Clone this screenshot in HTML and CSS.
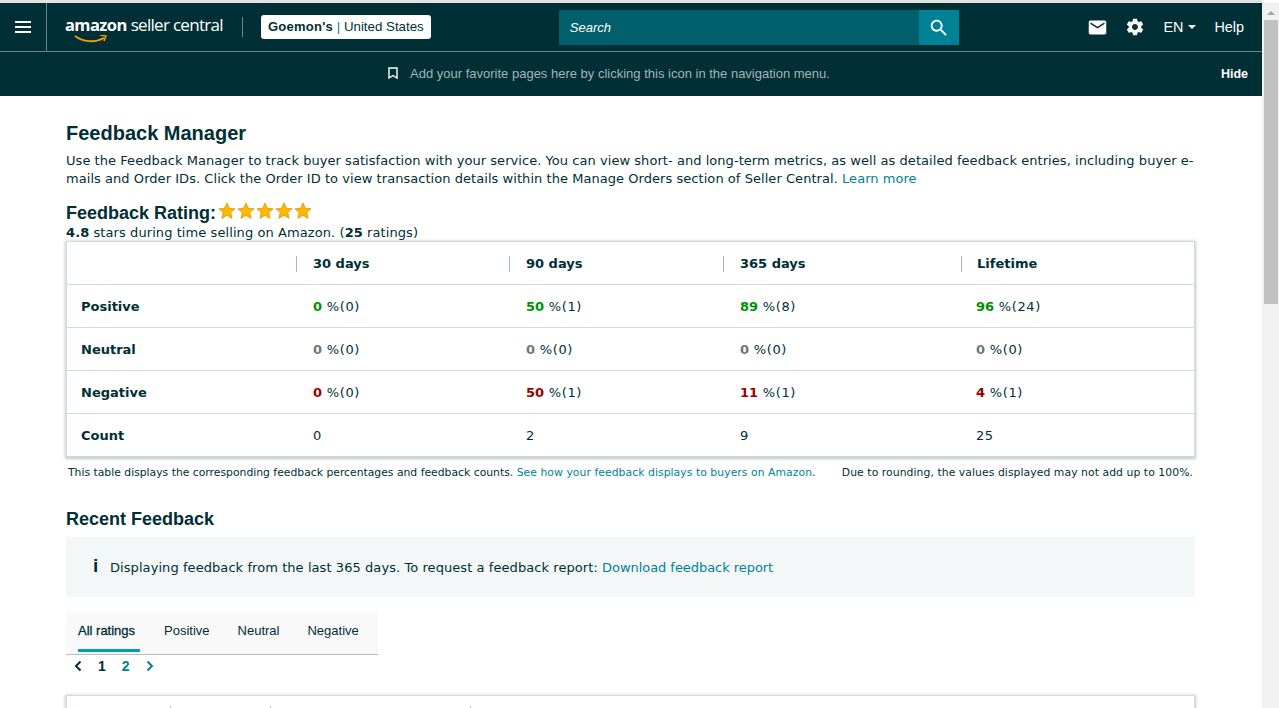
FILE: index.html
```html
<!doctype html>
<html lang="en">

<head>
    <meta charset="UTF-8">
    <title>Feedback Manager</title>
    <link rel="stylesheet" href="styles.css">
</head>

<body>
    <div class="page">
        <header class="topnav">
            <div class="topnav--menu">
                <svg width="16" height="12" viewBox="0 0 16 12"><path d="M0 1h16M0 6h16M0 11h16" stroke="#fff" stroke-width="2"/></svg>
            </div>
            <div class="topnav--logo">
                <span class="logo--amazon">amazon</span><span class="logo--rest">seller central</span>
                <svg class="logo--smile" width="34" height="9" viewBox="0 0 34 9"><path d="M1 1c8 6 20 7 29 2" fill="none" stroke="#f90" stroke-width="2"/><path d="M26 0l6 1-2 5" fill="none" stroke="#f90" stroke-width="1.5"/></svg>
            </div>
            <div class="topnav--divider"></div>
            <div class="topnav--account"><b>Goemon's</b> <i>|</i> United States</div>
            <div class="search">
                <span class="search--input">Search</span>
                <span class="search--button">
                    <svg width="22" height="22" viewBox="0 0 24 24"><path fill="#fff" d="M15.5 14h-.79l-.28-.27C15.41 12.59 16 11.11 16 9.5 16 5.91 13.09 3 9.5 3S3 5.91 3 9.5 5.91 16 9.5 16c1.61 0 3.09-.59 4.23-1.57l.27.28v.79l5 4.99L20.49 19l-4.99-5zm-6 0C7.01 14 5 11.99 5 9.5S7.01 5 9.5 5 14 7.01 14 9.5 11.99 14 9.5 14z"/></svg>
                </span>
            </div>
            <div class="topnav--right">
                <svg width="21" height="21" viewBox="0 0 24 24"><path fill="#fff" d="M20 4H4c-1.1 0-1.99.9-1.99 2L2 18c0 1.1.9 2 2 2h16c1.1 0 2-.9 2-2V6c0-1.1-.9-2-2-2zm0 4l-8 5-8-5V6l8 5 8-5v2z"/></svg>
                <svg class="icon--gear" width="20" height="20" viewBox="0 0 24 24"><path fill="#fff" d="M19.43 12.98c.04-.32.07-.64.07-.98s-.03-.66-.07-.98l2.11-1.65c.19-.15.24-.42.12-.64l-2-3.46c-.12-.22-.39-.3-.61-.22l-2.49 1c-.52-.4-1.08-.73-1.69-.98l-.38-2.65C14.46 2.18 14.25 2 14 2h-4c-.25 0-.46.18-.49.42l-.38 2.65c-.61.25-1.17.59-1.69.98l-2.49-1c-.23-.09-.49 0-.61.22l-2 3.46c-.13.22-.07.49.12.64l2.11 1.65c-.04.32-.07.65-.07.98s.03.66.07.98l-2.11 1.65c-.19.15-.24.42-.12.64l2 3.46c.12.22.39.3.61.22l2.49-1c.52.4 1.08.73 1.69.98l.38 2.65c.03.24.24.42.49.42h4c.25 0 .46-.18.49-.42l.38-2.65c.61-.25 1.17-.59 1.69-.98l2.49 1c.23.09.49 0 .61-.22l2-3.46c.12-.22.07-.49-.12-.64l-2.11-1.65zM12 15.5c-1.93 0-3.5-1.57-3.5-3.5s1.57-3.5 3.5-3.5 3.5 1.57 3.5 3.5-1.57 3.5-3.5 3.5z"/></svg>
                <span class="topnav--lang">EN<em class="caret"></em></span>
                <span class="topnav--help">Help</span>
            </div>
        </header>

        <div class="favbar">
            <div class="favbar--msg">
                <svg width="10" height="12" viewBox="0 0 10 12"><path d="M1 1h8v10L5 8.5 1 11z" fill="none" stroke="#fff" stroke-width="1.4"/></svg>
                <span>Add your favorite pages here by clicking this icon in the navigation menu.</span>
            </div>
            <span class="favbar--hide">Hide</span>
        </div>

        <main class="content">
            <h1 class="title">Feedback Manager</h1>
            <p class="intro">Use the Feedback Manager to track buyer satisfaction with your service. You can view short- and long-term metrics, as well as detailed feedback entries, including buyer e-mails and Order IDs. Click the Order ID to view transaction details within the Manage Orders section of Seller Central. <a href="#">Learn more</a></p>

            <div class="rating">
                <h2 class="rating--label">Feedback Rating:</h2>
                <div class="stars">
                    <svg width="18" height="18" viewBox="0 0 20 20"><path d="M10 1l2.7 6 6.3.6-4.8 4.2 1.5 6.4-5.700-3.400-5.700 3.400 1.500-6.400L1 7.600 7.300 7z" fill="#ffb800" stroke="#dd8d00" stroke-width=".8"/></svg>
                    <svg width="18" height="18" viewBox="0 0 20 20"><path d="M10 1l2.7 6 6.3.6-4.8 4.2 1.5 6.4-5.700-3.400-5.700 3.400 1.500-6.400L1 7.600 7.300 7z" fill="#ffb800" stroke="#dd8d00" stroke-width=".8"/></svg>
                    <svg width="18" height="18" viewBox="0 0 20 20"><path d="M10 1l2.7 6 6.3.6-4.8 4.2 1.5 6.4-5.700-3.400-5.700 3.400 1.500-6.400L1 7.600 7.300 7z" fill="#ffb800" stroke="#dd8d00" stroke-width=".8"/></svg>
                    <svg width="18" height="18" viewBox="0 0 20 20"><path d="M10 1l2.7 6 6.3.6-4.8 4.2 1.5 6.4-5.700-3.400-5.700 3.400 1.500-6.400L1 7.600 7.300 7z" fill="#ffb800" stroke="#dd8d00" stroke-width=".8"/></svg>
                    <svg width="18" height="18" viewBox="0 0 20 20"><path d="M10 1l2.7 6 6.3.6-4.8 4.2 1.5 6.4-5.700-3.400-5.700 3.400 1.500-6.400L1 7.600 7.300 7z" fill="#ffb800" stroke="#dd8d00" stroke-width=".8"/></svg>
                </div>
            </div>
            <p class="rating--sub"><b>4.8</b> stars during time selling on Amazon. (<b>25</b> ratings)</p>

            <div class="summary-card">
                <table class="summary">
                    <colgroup>
                        <col class="col--label"><col class="col--a"><col class="col--b"><col class="col--c"><col>
                    </colgroup>
                    <tr class="summary--head">
                        <th></th>
                        <th><span>30 days</span></th>
                        <th><span>90 days</span></th>
                        <th><span>365 days</span></th>
                        <th class="cell--last"><span>Lifetime</span></th>
                    </tr>
                    <tr>
                        <th>Positive</th>
                        <td><b class="pos">0</b> %(0)</td>
                        <td><b class="pos">50</b> %(1)</td>
                        <td><b class="pos">89</b> %(8)</td>
                        <td class="cell--last"><b class="pos">96</b> %(24)</td>
                    </tr>
                    <tr>
                        <th>Neutral</th>
                        <td><b class="neu">0</b> %(0)</td>
                        <td><b class="neu">0</b> %(0)</td>
                        <td><b class="neu">0</b> %(0)</td>
                        <td class="cell--last"><b class="neu">0</b> %(0)</td>
                    </tr>
                    <tr>
                        <th>Negative</th>
                        <td><b class="neg">0</b> %(0)</td>
                        <td><b class="neg">50</b> %(1)</td>
                        <td><b class="neg">11</b> %(1)</td>
                        <td class="cell--last"><b class="neg">4</b> %(1)</td>
                    </tr>
                    <tr>
                        <th>Count</th>
                        <td>0</td>
                        <td>2</td>
                        <td>9</td>
                        <td class="cell--last">25</td>
                    </tr>
                </table>
            </div>

            <div class="footnote">
                <span>This table displays the corresponding feedback percentages and feedback counts. <a href="#">See how your feedback displays to buyers on Amazon</a>.</span>
                <span class="footnote--right">Due to rounding, the values displayed may not add up to 100%.</span>
            </div>

            <h2 class="section-title">Recent Feedback</h2>
            <div class="notice">
                <span class="notice--icon">i</span>
                <span>Displaying feedback from the last 365 days. To request a feedback report: <a href="#">Download feedback report</a></span>
            </div>

            <div class="tabs">
                <span class="tab tab--active">All ratings</span>
                <span class="tab">Positive</span>
                <span class="tab">Neutral</span>
                <span class="tab">Negative</span>
            </div>
            <div class="pager">
                <svg width="8" height="12" viewBox="0 0 8 12"><path d="M6.500 1.500L2 6l4.500 4.500" fill="none" stroke="#002f36" stroke-width="2"/></svg>
                <span class="pager--num">1</span>
                <span class="pager--num pager--current">2</span>
                <svg width="8" height="12" viewBox="0 0 8 12"><path d="M1.500 1.500L6 6l-4.500 4.500" fill="none" stroke="#008296" stroke-width="2"/></svg>
            </div>

            <div class="list">
                <div class="list--head">
                    <span class="list--col1"></span>
                    <span class="list--col2"></span>
                    <span class="list--col3"></span>
                </div>
            </div>
        </main>
    </div>

    <div class="scrollbar">
        <div class="scrollbar--arrow"></div>
        <div class="scrollbar--thumb"></div>
    </div>
</body>

</html>
```

FILE: styles.css
```css
html, body {
    height: 100%;
    margin: 0;
    overflow: hidden;
}

body {
    display: flex;
    background: #fff;
    color: #002f36;
    font-family: "DejaVu Sans", Verdana, sans-serif;
    font-size: 13px;
}

a {
    color: #008296;
    text-decoration: none;
}

.page {
    flex: 1;
    min-width: 0;
    padding-top: 3px;
    height: 100%;
    box-sizing: border-box;
    overflow: hidden;
    box-shadow: inset 0 3px 0 #e3e3e3;
}

/* top nav */
.topnav {
    display: flex;
    align-items: center;
    height: 49px;
    box-sizing: border-box;
    background: #002f36;
    border-bottom: 1px solid #6d8488;
    font-family: "Liberation Sans", Arial, sans-serif;
    color: #fff;
}

.topnav--menu {
    display: flex;
    align-items: center;
    justify-content: center;
    width: 46px;
    height: 100%;
    border-right: 1px solid #6d8488;
    flex-shrink: 0;
}

.topnav--logo {
    position: relative;
    width: 160px;
    margin-left: 18px;
    margin-top: -5px;
    white-space: nowrap;
}

.logo--amazon {
    font-family: "Open Sans", sans-serif;
    font-size: 16.500px;
    font-weight: 700;
    letter-spacing: -0.6px;
}

.logo--rest {
    font-family: "Open Sans", sans-serif;
    font-size: 17px;
    margin-left: 4px;
    letter-spacing: -0.7px;
}

.logo--smile {
    position: absolute;
    left: 9px;
    top: 22px;
}

.topnav--divider {
    width: 1px;
    height: 20px;
    margin-left: 17px;
    background: #6d8488;
}

.topnav--account {
    height: 24px;
    margin-left: 18px;
    padding: 0 7px;
    line-height: 24px;
    background: #fff;
    border-radius: 3px;
    font-size: 13.300px;
    color: #002f36;
    white-space: nowrap;
}

.topnav--account b {
    font-size: 13px;
    letter-spacing: 0.25px;
}

.topnav--account i {
    font-style: normal;
    color: #008296;
}

.search {
    display: flex;
    width: 400px;
    height: 35px;
    margin-left: 128px;
    margin-top: 1px;
    background: #005f6b;
}

.search--input {
    flex: 1;
    padding-left: 11px;
    line-height: 35px;
    font-size: 13px;
    font-style: italic;
    color: #fff;
}

.search--button {
    display: flex;
    align-items: center;
    justify-content: center;
    width: 40px;
    background: #008296;
}

.topnav--right {
    display: flex;
    align-items: center;
    margin-left: auto;
    padding-right: 18px;
    font-size: 14.400px;
}

.icon--gear {
    margin-left: 17px;
}

.topnav--lang {
    display: flex;
    align-items: center;
    margin-left: 18px;
}

.caret {
    width: 0;
    height: 0;
    margin-left: 5px;
    border: 4px solid transparent;
    border-top: 4px solid #fff;
    border-bottom: 0;
}

.topnav--help {
    margin-left: 18px;
}

/* favorites bar */
.favbar {
    display: flex;
    align-items: center;
    justify-content: center;
    position: relative;
    height: 44px;
    background: #002f36;
    font-family: "Liberation Sans", Arial, sans-serif;
    font-size: 13px;
    color: #a2b4b7;
}

.favbar--msg {
    display: flex;
    align-items: center;
    gap: 12px;
    margin-right: 44px;
    margin-top: -2px;
}

.favbar--hide {
    position: absolute;
    right: 14px;
    top: 15px;
    color: #fff;
    font-size: 12.500px;
    font-weight: 700;
}

/* content */
.content {
    padding: 26px 67px 0 66px;
}

.title {
    margin: 0;
    font-family: "Liberation Sans", Arial, sans-serif;
    font-size: 20px;
    line-height: 23px;
    font-weight: 700;
}

.intro {
    margin: 7px 0 0;
    line-height: 18px;
    letter-spacing: 0.05px;
}

.rating {
    display: flex;
    align-items: center;
    gap: 1px;
    margin-top: 15px;
    height: 20px;
}

.rating--label {
    margin: 0;
    font-family: "Liberation Sans", Arial, sans-serif;
    font-size: 18px;
    font-weight: 700;
}

.stars {
    display: flex;
    margin-top: -4px;
    margin-left: 1px;
    gap: 1px;
}

.rating--sub {
    margin: 2px 0 0;
    line-height: 15px;
    letter-spacing: 0.08px;
}

.summary-card {
    margin-top: 1px;
    border: 1px solid #d5d9d9;
    box-shadow: 0 1px 3px 1px #c4c8c8;
}

.summary {
    width: 100%;
    border-collapse: collapse;
    table-layout: fixed;
}

.col--label { width: 230px; }
.col--a { width: 213px; }
.col--b { width: 214px; }
.col--c { width: 238px; }

.summary tr {
    height: 43px;
    border-top: 1px solid #d5d9d9;
}

.summary tr:first-child {
    height: 42px;
    border-top: 0;
}

.summary th {
    padding: 2px 0 0 14px;
    text-align: left;
    font-weight: 700;
}

.summary td {
    padding: 2px 0 0 16px;
    letter-spacing: 0.6px;
}

.summary td b {
    letter-spacing: 0;
}

.summary .cell--last {
    padding-left: 14px;
}

.summary--head th {
    padding-left: 0;
}

.summary--head th span {
    display: block;
    margin-left: -1px;
    padding-left: 15px;
    line-height: 16px;
    border-left: 1px solid #a9b7b9;
}

.summary--head th:not(.cell--last) span {
    padding-left: 16px;
}

.summary--head .cell--last {
    padding-left: 0;
}

.pos { color: #009100; }
.neu { color: #6c7778; }
.neg { color: #990000; }

.footnote {
    display: flex;
    justify-content: space-between;
    padding: 0 2px;
    margin-top: 9px;
    font-size: 10.800px;
    line-height: 14px;
}

.footnote a {
    letter-spacing: 0.06px;
}

.footnote--right {
    letter-spacing: 0.07px;
}

.section-title {
    margin: 29px 0 0;
    font-family: "Liberation Sans", Arial, sans-serif;
    font-size: 18px;
    line-height: 21px;
    font-weight: 700;
}

.notice {
    display: flex;
    align-items: center;
    height: 60px;
    margin-top: 7px;
    padding-left: 27px;
    background: #f3f7f8;
    letter-spacing: 0.07px;
}

.notice a {
    letter-spacing: -0.05px;
}

.notice--icon {
    width: 17px;
    font-family: "Liberation Sans", Arial, sans-serif;
    font-size: 19px;
    font-weight: 700;
    margin-top: -3px;
}

.tabs {
    display: flex;
    width: 312px;
    height: 44px;
    margin-top: 14px;
    padding-left: 12px;
    box-sizing: border-box;
    background: #f9f9f9;
    border-bottom: 1px solid #b8bcbc;
    font-family: "Liberation Sans", Arial, sans-serif;
    font-size: 13px;
}

.tab {
    flex-shrink: 0;
    margin-right: 28px;
    line-height: 40px;
    white-space: nowrap;
}

.tab:last-child {
    margin-right: 0;
}

.tab--active {
    width: 62px;
    height: 41px;
    margin-right: 24px;
    border-bottom: 3px solid #00a0b0;
    box-sizing: border-box;
    -webkit-text-stroke: 0.3px #002f36;
}

.pager {
    display: flex;
    align-items: center;
    height: 22px;
    padding-left: 8px;
    font-family: "Liberation Sans", Arial, sans-serif;
    font-size: 14px;
    font-weight: 700;
}

.pager--num {
    margin-left: 16px;
}

.pager--current {
    margin-left: 16px;
    margin-right: 16px;
    color: #008296;
}

.list {
    margin-top: 18px;
    height: 60px;
    border: 1px solid #d5d9d9;
    box-shadow: 0 1px 3px 1px #c4c8c8;
}

.list--head {
    display: flex;
    height: 12px;
    align-items: flex-end;
}

.list--head span {
    height: 2px;
    border-right: 1px solid #a9b7b9;
}

.list--col1 { width: 103px; }
.list--col2 { width: 99px; }
.list--col3 { width: 199px; }

/* fake browser scrollbar */
.scrollbar {
    position: relative;
    width: 17px;
    flex-shrink: 0;
    margin-top: 3px;
    background: #f1f1f1;
}

.scrollbar--arrow {
    width: 0;
    margin: 8px auto 0;
    border: 4px solid transparent;
    border-top: 0;
    border-bottom: 4px solid #a3a3a3;
}

.scrollbar--thumb {
    height: 284px;
    margin: 5px 1px 0 2px;
    background: #c1c1c1;
}
```
